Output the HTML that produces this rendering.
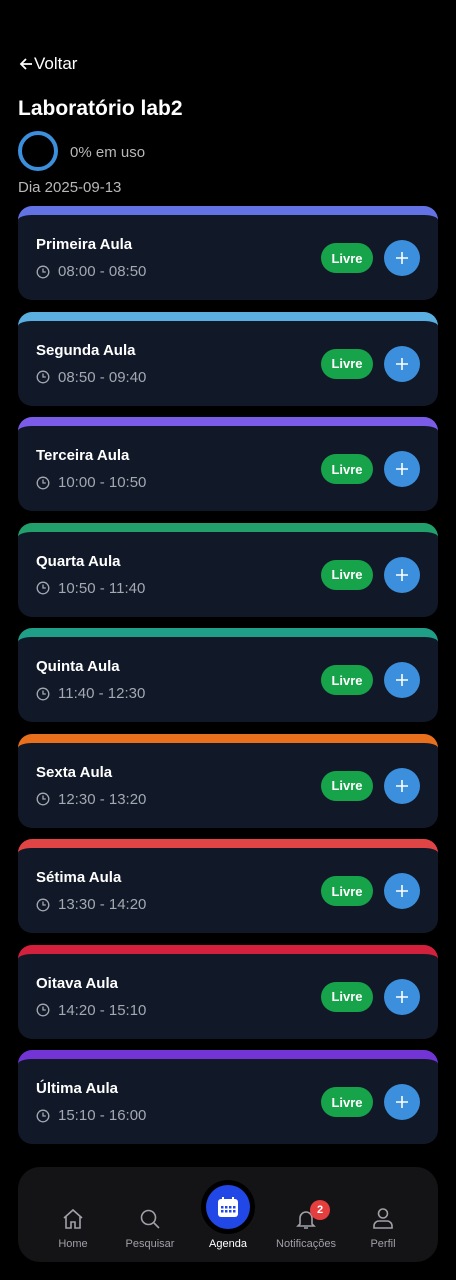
<!DOCTYPE html>
<html><head><meta charset="utf-8"><style>
*{margin:0;padding:0;box-sizing:border-box}
body{width:456px;height:1280px;background:#000;font-family:"Liberation Sans",sans-serif;color:#fff;position:relative;overflow:hidden}
.abs{position:absolute}
.card{position:absolute;left:18px;width:420px;height:94px;background:#111827;border-radius:14px;border-top:9px solid;overflow:hidden}
.t{position:absolute;left:18px;top:21px;font-weight:bold;font-size:15px}
.tm{position:absolute;left:18px;top:48px;font-size:15px;color:#a3a8b2;display:flex;align-items:center;gap:8px}
.pill{position:absolute;left:303px;top:28px;width:52px;height:30px;border-radius:15px;background:#16a34a;font-weight:bold;font-size:13px;display:flex;align-items:center;justify-content:center}
.plus{position:absolute;left:366px;top:25px;width:36px;height:36px;border-radius:50%;background:#3b8fdc;display:flex;align-items:center;justify-content:center}
.nav{position:absolute;left:18px;top:1167px;width:420px;height:95px;background:#141416;border-radius:22px}
.it{position:absolute;top:1238px;font-size:11px;color:#a0a0a8;text-align:center;width:80px}
</style></head><body>
<div class="abs" style="left:18px;top:54px;font-size:17px;display:flex;align-items:center">
<svg width="16" height="16" viewBox="0 0 16 16"><path d="M14 8H3M8 3L3 8l5 5" stroke="#fff" stroke-width="1.8" fill="none"/></svg>Voltar</div>
<div class="abs" style="left:18px;top:97px;font-size:21px;font-weight:bold">Laboratório lab2</div>
<div class="abs" style="left:18px;top:131px;width:40px;height:40px;border-radius:50%;border:4px solid #3b8fdc"></div>
<div class="abs" style="left:70px;top:144px;font-size:15px;color:#b8b8b8">0% em uso</div>
<div class="abs" style="left:18px;top:179px;font-size:15px;color:#b8b8b8">Dia 2025-09-13</div>
<div id="cards"></div>
<div class="nav"></div>
<div class="abs" style="left:201px;top:1180px;width:54px;height:54px;border-radius:50%;background:#000"></div>
<div class="abs" style="left:206px;top:1185px;width:44px;height:44px;border-radius:50%;background:#2148e6;display:flex;align-items:center;justify-content:center">
<svg width="22" height="22" viewBox="0 0 22 22"><rect x="1" y="3" width="20" height="18" rx="3" fill="#fff"/><rect x="5" y="1" width="2" height="4" fill="#fff"/><rect x="15" y="1" width="2" height="4" fill="#fff"/><g fill="#2148e6"><rect x="4" y="10" width="2.5" height="2.5"/><rect x="8" y="10" width="2.5" height="2.5"/><rect x="12" y="10" width="2.5" height="2.5"/><rect x="16" y="10" width="2.5" height="2.5"/><rect x="4" y="14" width="2.5" height="2.5"/><rect x="8" y="14" width="2.5" height="2.5"/><rect x="12" y="14" width="2.5" height="2.5"/><rect x="16" y="14" width="2.5" height="2.5"/></g></svg></div>
<svg class="abs" style="left:61px;top:1207px" width="24" height="24" viewBox="0 0 24 24" fill="none" stroke="#a0a0a8" stroke-width="1.6"><path d="M3 11L12 3l9 8M5 9v12h5v-6h4v6h5V9"/></svg>
<svg class="abs" style="left:138px;top:1207px" width="24" height="24" viewBox="0 0 24 24" fill="none" stroke="#a0a0a8" stroke-width="1.6"><circle cx="10.5" cy="10.5" r="7"/><path d="M16 16l5 5"/></svg>
<svg class="abs" style="left:294px;top:1207px" width="24" height="24" viewBox="0 0 24 24" fill="none" stroke="#a0a0a8" stroke-width="1.6"><path d="M6 17V11a6 6 0 0112 0v6l2 2H4zM10 21h4"/></svg>
<div class="abs" style="left:310px;top:1200px;width:20px;height:20px;border-radius:50%;background:#e53e3e;font-size:11px;font-weight:bold;display:flex;align-items:center;justify-content:center">2</div>
<svg class="abs" style="left:371px;top:1206px" width="24" height="24" viewBox="0 0 24 24" fill="none" stroke="#a0a0a8" stroke-width="1.6"><circle cx="12" cy="7.5" r="4.5"/><path d="M3 22v-2a5 5 0 015-5h8a5 5 0 015 5v2z"/></svg>
<div class="it" style="left:33px">Home</div>
<div class="it" style="left:110px">Pesquisar</div>
<div class="it" style="left:188px;color:#fff">Agenda</div>
<div class="it" style="left:266px">Notificações</div>
<div class="it" style="left:343px">Perfil</div>
<script>
var d=[["Primeira Aula","08:00 - 08:50","#6373e6"],["Segunda Aula","08:50 - 09:40","#5aafe0"],["Terceira Aula","10:00 - 10:50","#7a5ce8"],["Quarta Aula","10:50 - 11:40","#22a06b"],["Quinta Aula","11:40 - 12:30","#1f9e88"],["Sexta Aula","12:30 - 13:20","#e8701c"],["Sétima Aula","13:30 - 14:20","#e04444"],["Oitava Aula","14:20 - 15:10","#d3203c"],["Última Aula","15:10 - 16:00","#7234d4"]];
var h="";d.forEach(function(c,i){var top=206+i*105.5;
h+='<div class="card" style="top:'+top+'px;border-top-color:'+c[2]+'"><div class="t">'+c[0]+'</div><div class="tm"><svg width="14" height="14" viewBox="0 0 14 14" fill="none" stroke="#a3a8b2" stroke-width="1.3"><circle cx="7" cy="7" r="5.8"/><path d="M7 3.5V7h2.8"/></svg>'+c[1]+'</div><div class="pill">Livre</div><div class="plus"><svg width="14" height="14" viewBox="0 0 14 14"><path d="M7 1v12M1 7h12" stroke="#fff" stroke-width="1.6"/></svg></div></div>';});
document.getElementById("cards").innerHTML=h;
</script>
</body></html>
